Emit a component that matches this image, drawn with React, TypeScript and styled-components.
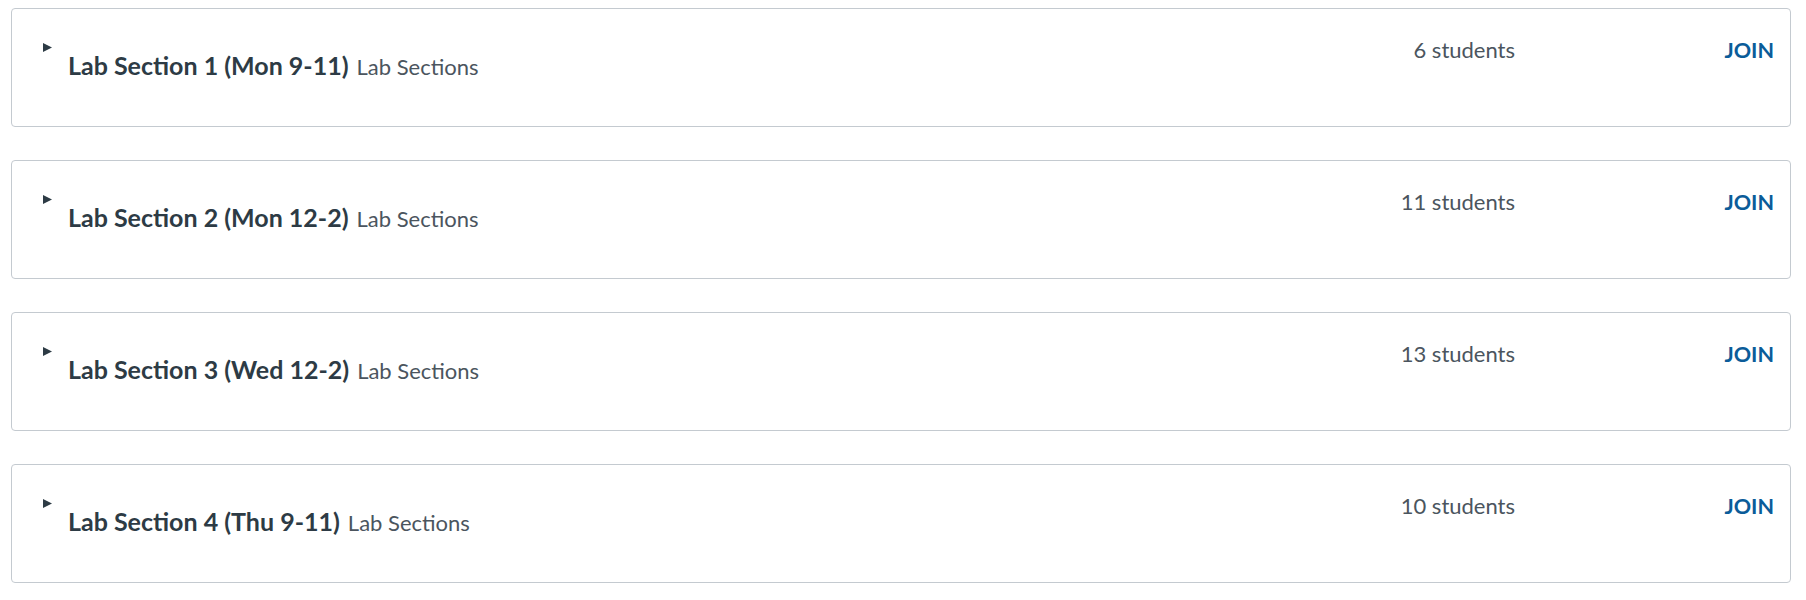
import {type FC} from 'react';
import styled, {createGlobalStyle} from 'styled-components';

const GlobalStyle = createGlobalStyle`
  body {
    margin: 0;
    background: #fff;
    font-family: Lato, "Open Sans", "Liberation Sans", sans-serif;
    color: #2d3b45;
  }
`;

const GroupList = styled.div`
  display: flex;
  flex-direction: column;
  gap: 33px;
  padding: 8px 15px 0 11px;
`;

const Card = styled.div`
  display: flex;
  align-items: flex-start;
  height: 119px;
  box-sizing: border-box;
  border: 1px solid #c4cad0;
  border-radius: 4px;
  background: #fff;
  padding: 0 16px 0 30px;
`;

const Toggle = styled.button`
  display: flex;
  align-items: center;
  justify-content: center;
  width: 10px;
  height: 10px;
  margin-top: 33px;
  padding: 0;
  border: 0;
  background: none;
  cursor: pointer;
`;

const Heading = styled.div`
  flex: 1;
  margin: 44px 0 0 16px;
  font-size: 25px;
  line-height: 1;
  white-space: nowrap;
`;

const GroupName = styled.span`
  font-weight: 700;
  color: #2d3b45;
`;

const Category = styled.span`
  font-size: 22px;
  color: #4b555e;
  margin-left: 8px;
`;

const Count = styled.div`
  margin-top: 30px;
  font-size: 22px;
  line-height: 1;
  color: #4b555e;
  white-space: nowrap;
`;

const JoinButton = styled.button`
  width: 259px;
  margin-top: 31px;
  padding: 0;
  border: 0;
  background: none;
  text-align: right;
  font-family: inherit;
  font-size: 21.5px;
  font-weight: 700;
  line-height: 1;
  color: #0b5c99;
  cursor: pointer;
`;

type Group = {name: string; count: number};

const groups: Group[] = [
  {name: 'Lab Section 1 (Mon 9-11)', count: 6},
  {name: 'Lab Section 2 (Mon 12-2)', count: 11},
  {name: 'Lab Section 3 (Wed 12-2)', count: 13},
  {name: 'Lab Section 4 (Thu 9-11)', count: 10},
];

const Caret: FC = () => (
  <svg width="9" height="9" viewBox="0 0 9 9">
    <path d="M0 0 L9 4.5 L0 9 Z" fill="#2d3b45" />
  </svg>
);

const App: FC = () => (
  <>
    <GlobalStyle />
    <GroupList>
      {groups.map(group => (
        <Card key={group.name}>
          <Toggle aria-label={`Toggle ${group.name}`}>
            <Caret />
          </Toggle>
          <Heading>
            <GroupName>{group.name}</GroupName>
            <Category>Lab Sections</Category>
          </Heading>
          <Count>{group.count} students</Count>
          <JoinButton>JOIN</JoinButton>
        </Card>
      ))}
    </GroupList>
  </>
);

export default App;
